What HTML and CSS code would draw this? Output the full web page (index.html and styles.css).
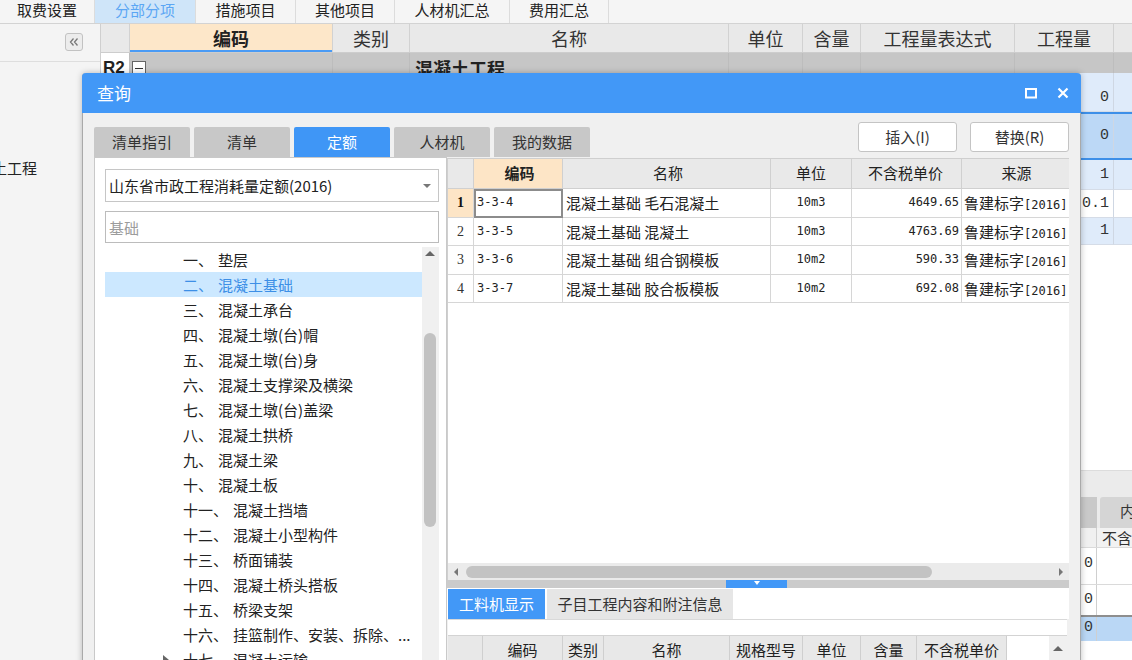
FILE: index.html
```html
<!DOCTYPE html>
<html lang="zh-CN">
<head>
<meta charset="utf-8">
<title>查询</title>
<link rel="stylesheet" href="styles.css">
</head>
<body>
<div class="app">
  <div class="topbar">
    <div class="ttab">取费设置</div>
    <div class="ttab active">分部分项</div>
    <div class="ttab">措施项目</div>
    <div class="ttab">其他项目</div>
    <div class="ttab">人材机汇总</div>
    <div class="ttab">费用汇总</div>
  </div>
  <div class="main">
    <aside class="side">
      <div class="side-head">
        <span class="collapse"><svg width="16" height="16" viewBox="0 0 16 16"><path d="M7.5 4.5L4.5 8L7.5 11.5M11.5 4.5L8.5 8L11.5 11.5" fill="none" stroke="#777" stroke-width="1.3"/></svg></span>
      </div>
      <div class="side-item">土工程</div>
    </aside>
    <section class="grid">
      <div class="g-row g-head">
        <div class="c c-num"></div>
        <div class="c c-code hl">编码</div>
        <div class="c c-type">类别</div>
        <div class="c c-name">名称</div>
        <div class="c c-unit">单位</div>
        <div class="c c-qty">含量</div>
        <div class="c c-expr">工程量表达式</div>
        <div class="c c-amt">工程量</div>
        <div class="c c-more"></div>
      </div>
      <div class="g-row g-r2">
        <div class="c c-num">R2</div>
        <div class="c c-code"><span class="minus"></span></div>
        <div class="c c-type"></div>
        <div class="c c-name">混凝土工程</div>
        <div class="c c-unit"></div>
        <div class="c c-qty"></div>
        <div class="c c-expr"></div>
        <div class="c c-amt"></div>
        <div class="c c-more"></div>
      </div>
      <div class="g-row d-row lb h39">
        <div class="c c-num"></div><div class="c c-code"></div><div class="c c-type"></div><div class="c c-name"></div><div class="c c-unit"></div><div class="c c-qty"></div><div class="c c-expr"></div>
        <div class="c c-amt">0</div><div class="c c-more"></div>
      </div>
      <div class="g-row d-row sel h44">
        <div class="c c-num"></div><div class="c c-code"></div><div class="c c-type"></div><div class="c c-name"></div><div class="c c-unit"></div><div class="c c-qty"></div><div class="c c-expr"></div>
        <div class="c c-amt">0</div><div class="c c-more"></div>
      </div>
      <div class="g-row d-row lb h30">
        <div class="c c-num"></div><div class="c c-code"></div><div class="c c-type"></div><div class="c c-name"></div><div class="c c-unit"></div><div class="c c-qty"></div><div class="c c-expr"></div>
        <div class="c c-amt">1</div><div class="c c-more"></div>
      </div>
      <div class="g-row d-row h28">
        <div class="c c-num"></div><div class="c c-code"></div><div class="c c-type"></div><div class="c c-name"></div><div class="c c-unit"></div><div class="c c-qty"></div><div class="c c-expr"></div>
        <div class="c c-amt">0.1</div><div class="c c-more"></div>
      </div>
      <div class="g-row d-row lb h27">
        <div class="c c-num"></div><div class="c c-code"></div><div class="c c-type"></div><div class="c c-name"></div><div class="c c-unit"></div><div class="c c-qty"></div><div class="c c-expr"></div>
        <div class="c c-amt">1</div><div class="c c-more"></div>
      </div>
      <div class="g-fill"></div>
      <div class="g-bottom">
        <div class="gb-band"></div>
        <div class="gb-tabs">
          <div class="gb-lead"></div>
          <div class="gb-tab">内容指引</div>
        </div>
        <div class="gb-row gb-head">
          <div class="gb-c1"></div>
          <div class="gb-c2">不含税单价</div>
        </div>
        <div class="gb-row h37">
          <div class="gb-c1">0</div>
          <div class="gb-c2"></div>
        </div>
        <div class="gb-row h30b">
          <div class="gb-c1">0</div>
          <div class="gb-c2"></div>
        </div>
        <div class="gb-row gb-sel">
          <div class="gb-c1">0</div>
          <div class="gb-c2"></div>
        </div>
      </div>
    </section>
  </div>
</div>

<div class="dialog">
  <div class="dlg-title">
    <span class="dlg-name">查询</span>
    <span class="dlg-icons">
      <svg class="ico" width="12" height="11" viewBox="0 0 12 11"><rect x="1" y="1" width="10" height="8.5" fill="none" stroke="#fff" stroke-width="2"/></svg>
      <svg class="ico" width="12" height="12" viewBox="0 0 12 12"><path d="M1.5 1.5L10.5 10.5M10.5 1.5L1.5 10.5" fill="none" stroke="#fff" stroke-width="2.2"/></svg>
    </span>
  </div>
  <div class="dlg-body">
    <div class="dlg-top">
      <div class="tabs">
        <div class="tab">清单指引</div>
        <div class="tab">清单</div>
        <div class="tab active">定额</div>
        <div class="tab">人材机</div>
        <div class="tab">我的数据</div>
      </div>
      <div class="btns">
        <button class="btn">插入(I)</button>
        <button class="btn">替换(R)</button>
      </div>
    </div>
    <div class="dlg-content">
      <div class="lpanel">
        <div class="select"><span>山东省市政工程消耗量定额(2016)</span><span class="caret"></span></div>
        <input class="search" type="text" placeholder="基础">
        <div class="tree">
          <ul class="tree-list">
            <li class="node"><span class="tg"></span><span class="no">一、</span><span>垫层</span></li>
            <li class="node on"><span class="tg"></span><span class="no">二、</span><span>混凝土基础</span></li>
            <li class="node"><span class="tg"></span><span class="no">三、</span><span>混凝土承台</span></li>
            <li class="node"><span class="tg"></span><span class="no">四、</span><span>混凝土墩(台)帽</span></li>
            <li class="node"><span class="tg"></span><span class="no">五、</span><span>混凝土墩(台)身</span></li>
            <li class="node"><span class="tg"></span><span class="no">六、</span><span>混凝土支撑梁及横梁</span></li>
            <li class="node"><span class="tg"></span><span class="no">七、</span><span>混凝土墩(台)盖梁</span></li>
            <li class="node"><span class="tg"></span><span class="no">八、</span><span>混凝土拱桥</span></li>
            <li class="node"><span class="tg"></span><span class="no">九、</span><span>混凝土梁</span></li>
            <li class="node"><span class="tg"></span><span class="no">十、</span><span>混凝土板</span></li>
            <li class="node"><span class="tg"></span><span class="no">十一、</span><span>混凝土挡墙</span></li>
            <li class="node"><span class="tg"></span><span class="no">十二、</span><span>混凝土小型构件</span></li>
            <li class="node"><span class="tg"></span><span class="no">十三、</span><span>桥面铺装</span></li>
            <li class="node"><span class="tg"></span><span class="no">十四、</span><span>混凝土桥头搭板</span></li>
            <li class="node"><span class="tg"></span><span class="no">十五、</span><span>桥梁支架</span></li>
            <li class="node"><span class="tg"></span><span class="no">十六、</span><span>挂篮制作、安装、拆除、...</span></li>
            <li class="node"><span class="tg"><span class="tri"></span></span><span class="no">十七、</span><span>混凝土运输</span></li>
          </ul>
          <div class="vscroll">
            <span class="arr-up"></span>
            <span class="vthumb"></span>
          </div>
        </div>
      </div>
      <div class="rpanel">
        <div class="qtable">
          <div class="q-row q-head">
            <div class="q q-n"></div>
            <div class="q q-code hl">编码</div>
            <div class="q q-name">名称</div>
            <div class="q q-unit">单位</div>
            <div class="q q-price">不含税单价</div>
            <div class="q q-src">来源</div>
          </div>
          <div class="q-row">
            <div class="q q-n cur">1</div>
            <div class="q q-code mono focus">3-3-4</div>
            <div class="q q-name">混凝土基础 毛石混凝土</div>
            <div class="q q-unit mono">10m3</div>
            <div class="q q-price mono">4649.65</div>
            <div class="q q-src">鲁建标字<span class="mono">[2016]</span></div>
          </div>
          <div class="q-row">
            <div class="q q-n">2</div>
            <div class="q q-code mono">3-3-5</div>
            <div class="q q-name">混凝土基础 混凝土</div>
            <div class="q q-unit mono">10m3</div>
            <div class="q q-price mono">4763.69</div>
            <div class="q q-src">鲁建标字<span class="mono">[2016]</span></div>
          </div>
          <div class="q-row">
            <div class="q q-n">3</div>
            <div class="q q-code mono">3-3-6</div>
            <div class="q q-name">混凝土基础 组合钢模板</div>
            <div class="q q-unit mono">10m2</div>
            <div class="q q-price mono">590.33</div>
            <div class="q q-src">鲁建标字<span class="mono">[2016]</span></div>
          </div>
          <div class="q-row">
            <div class="q q-n">4</div>
            <div class="q q-code mono">3-3-7</div>
            <div class="q q-name">混凝土基础 胶合板模板</div>
            <div class="q q-unit mono">10m2</div>
            <div class="q q-price mono">692.08</div>
            <div class="q q-src">鲁建标字<span class="mono">[2016]</span></div>
          </div>
        </div>
        <div class="hscroll">
          <span class="arr arr-l"></span>
          <span class="hthumb"></span>
          <span class="hspace"></span>
          <span class="arr arr-r"></span>
        </div>
        <div class="splitter"><span class="handle"></span></div>
        <div class="btabs">
          <div class="btab active">工料机显示</div>
          <div class="btab">子目工程内容和附注信息</div>
        </div>
        <div class="bband"></div>
        <div class="bhead">
          <div class="b b1"></div>
          <div class="b b2">编码</div>
          <div class="b b3">类别</div>
          <div class="b b4">名称</div>
          <div class="b b5">规格型号</div>
          <div class="b b6">单位</div>
          <div class="b b7">含量</div>
          <div class="b b8">不含税单价</div>
          <div class="bspace"></div>
          <div class="bscroll"><span class="arr-up"></span></div>
        </div>
      </div>
    </div>
  </div>
</div>
</body>
</html>
```

FILE: styles.css
```css
* { box-sizing: border-box; }
html, body {
  margin: 0;
  padding: 0;
  width: 1132px;
  height: 660px;
  overflow: hidden;
  background: #fff;
}
body {
  position: relative;
  font-family: "Noto Sans CJK SC", "Noto Sans", sans-serif;
  font-size: 15px;
  color: #222;
}
.mono { font-family: "DejaVu Sans Mono", "Liberation Mono", monospace; font-size: 12px; }

/* ---------- background app ---------- */
.app { display: flex; flex-direction: column; height: 660px; }
.topbar {
  display: flex;
  height: 24px;
  flex: none;
  background: #f5f5f5;
  border-bottom: 1px solid #d3d3d3;
}
.ttab {
  flex: none;
  width: 100px;
  border-right: 1px solid #dcdcdc;
  text-align: center;
  line-height: 19px;
  font-size: 15px;
  color: #222;
}
.ttab:nth-child(1) { width: 95px; }
.ttab:nth-child(2) { width: 101px; }
.ttab:nth-child(4) { width: 99px; }
.ttab:nth-child(5) { width: 115px; }
.ttab:nth-child(6) { width: 99px; }
.ttab.active { background: #cfe5f9; color: #5ba6f4; }

.main { display: flex; flex: 1; min-height: 0; }
.side {
  flex: none;
  width: 101px;
  background: #f4f4f4;
  border-right: 1px solid #cfcfcf;
}
.side-head {
  height: 38px;
  border-bottom: 1px solid #dedede;
  padding: 9px 0 0 65px;
}
.collapse {
  display: flex;
  align-items: center;
  justify-content: center;
  width: 18px;
  height: 18px;
  border: 1px solid #c2c2c2;
  border-radius: 3px;
  background: #ececec;
}
.side-item {
  margin: 94px 0 0 -8px;
  line-height: 24px;
  font-size: 15px;
  color: #222;
  white-space: nowrap;
}

.grid {
  flex: 1;
  min-width: 0;
  display: flex;
  flex-direction: column;
  overflow: hidden;
}
.g-row { display: flex; flex: none; }
.c {
  flex: none;
  border-right: 1px solid #d2d2d2;
  white-space: nowrap;
  overflow: hidden;
}
.c-num { width: 29px; }
.c-code { width: 203px; }
.c-type { width: 77px; }
.c-name { width: 319px; }
.c-unit { width: 74px; }
.c-qty { width: 58px; }
.c-expr { width: 154px; }
.c-amt { width: 99px; }
.c-more { width: 140px; }

.g-head {
  height: 29px;
  background: #e9e9e9;
  border-bottom: 1px solid #cdcdcd;
}
.g-head .c {
  text-align: center;
  font-size: 18px;
  line-height: 28px;
  color: #333;
}
.g-head .c.hl {
  background: #fde7c9;
  font-weight: bold;
  color: #222;
  box-shadow: inset 0 -2px 0 #4a9bf5;
}
.g-r2 {
  height: 20px;
  background: #c6c6c6;
  overflow: hidden;
}
.g-r2 .c {
  line-height: 30px;
  font-size: 18px;
  font-weight: bold;
  border-right-color: #bdbdbd;
}
.g-r2 .c-num {
  background: #fff;
  font-family: "Liberation Sans", sans-serif;
  font-size: 17px;
  padding-left: 2px;
}
.g-r2 .c-code { padding: 8px 0 0 2px; }
.minus {
  display: block;
  width: 14px;
  height: 14px;
  border: 1px solid #666;
  background: #fff;
  position: relative;
}
.minus::after {
  content: "";
  position: absolute;
  left: 2px;
  right: 2px;
  top: 6px;
  height: 1px;
  background: #333;
}
.g-r2 .c-name { padding-left: 5px; }

.d-row .c {
  border-right-color: #cfd7e3;
  border-bottom: 1px solid #d5dce7;
}
.d-row .c-amt {
  text-align: right;
  padding-right: 4px;
  font-family: "Liberation Mono", monospace;
  font-size: 15px;
  color: #333;
}
.d-row.lb { background: #dfebfa; }
.d-row.sel {
  background: #bcd8f6;
  border-top: 2px solid #3d8fe8;
  border-bottom: 2px solid #3d8fe8;
}
.d-row.sel .c { border-bottom: 0; }
.h39 { height: 39px; }
.h39 .c { line-height: 50px; }
.h44 { height: 48px; }
.h44 .c { line-height: 44px; }
.h30 { height: 30px; }
.h30 .c { line-height: 30px; }
.h28 { height: 28px; }
.h28 .c { line-height: 28px; }
.h27 { height: 27px; }
.h27 .c { line-height: 26px; }

.g-fill { flex: 1; }
.g-bottom { flex: none; height: 190px; display: flex; flex-direction: column; }
.gb-band { height: 18px; background: #ebebeb; border-top: 1px solid #dcdcdc; }
.gb-tabs {
  height: 40px;
  background: #ebebeb;
  display: flex;
  align-items: flex-end;
  gap: 3px;
}
.gb-lead { width: 996px; height: 31px; background: #c9c9c9; flex: none; }
.gb-tab {
  flex: none;
  width: 140px;
  height: 31px;
  background: #d5d5d5;
  border-radius: 3px 3px 0 0;
  padding-left: 20px;
  line-height: 28px;
  font-size: 15px;
  color: #333;
  white-space: nowrap;
}
.gb-row { display: flex; border-bottom: 1px solid #dadada; }
.gb-c1 {
  flex: none;
  width: 996px;
  border-right: 1px solid #cfcfcf;
  text-align: right;
  padding-right: 3px;
  font-family: "Liberation Mono", monospace;
  font-size: 15px;
  color: #333;
}
.gb-c2 { flex: 1; padding-left: 5px; white-space: nowrap; }
.gb-head { height: 20px; background: #f2f2f2; }
.gb-head .gb-c1 { background: #f0f0f0; }
.gb-head .gb-c2 { line-height: 20px; font-size: 15px; color: #333; }
.h37 { height: 37px; }
.h37 .gb-c1 { line-height: 32px; }
.h30b { height: 30px; border-bottom: 0; }
.h30b .gb-c1 { line-height: 30px; }
.gb-sel {
  height: 26px;
  background: #bad7f5;
  border-top: 2px solid #8e8e8e;
  border-bottom: 0;
}
.gb-sel .gb-c1 { line-height: 22px; }

/* ---------- dialog ---------- */
.dialog {
  position: absolute;
  left: 82px;
  top: 73px;
  width: 999px;
  height: 620px;
  border: 1px solid #a9a9a9;
  border-top: 0;
  border-radius: 4px 4px 0 0;
  background: #f0f0f0;
  box-shadow: 0 0 6px rgba(0, 0, 0, 0.25);
  display: flex;
  flex-direction: column;
}
.dlg-title {
  flex: none;
  height: 40px;
  margin: 0 -1px;
  background: #4298f7;
  border-radius: 4px 4px 0 0;
  display: flex;
  align-items: center;
  justify-content: space-between;
  padding: 0 12px 0 15px;
}
.dlg-name { color: #fff; font-size: 17px; line-height: 40px; }
.dlg-icons { display: flex; align-items: center; gap: 20px; }
.ico { display: block; }

.dlg-body {
  flex: 1;
  min-height: 0;
  display: flex;
  flex-direction: column;
  padding: 9px 11px 0 11px;
}
.dlg-top {
  flex: none;
  height: 35px;
  display: flex;
  justify-content: space-between;
}
.tabs { display: flex; gap: 4px; align-self: flex-end; }
.tab {
  width: 96px;
  height: 30px;
  background: #c8c8c8;
  border-radius: 2px 2px 0 0;
  text-align: center;
  line-height: 30px;
  font-size: 15px;
  color: #333;
}
.tab.active { background: #3f96f6; color: #fff; }
.btns { display: flex; gap: 13px; align-self: flex-start; }
.btn {
  width: 99px;
  height: 30px;
  background: #fff;
  border: 1px solid #c4c4c4;
  border-radius: 3px;
  font-family: "Noto Sans CJK SC", "Noto Sans", sans-serif;
  font-size: 15px;
  color: #333;
  padding: 0;
  line-height: 26px;
}

.dlg-content { flex: 1; min-height: 0; display: flex; }
.lpanel {
  flex: none;
  width: 353px;
  background: #fff;
  border: 1px solid #c9c9c9;
  border-bottom: 0;
  padding: 11px 7px 0 10px;
  display: flex;
  flex-direction: column;
}
.select {
  flex: none;
  height: 33px;
  border: 1px solid #c6c6c6;
  padding: 0 7px 0 3px;
  display: flex;
  align-items: center;
  justify-content: space-between;
  font-size: 15px;
  color: #222;
  white-space: nowrap;
}
.caret {
  width: 0;
  height: 0;
  border-left: 4px solid transparent;
  border-right: 4px solid transparent;
  border-top: 4px solid #777;
}
.search {
  flex: none;
  margin: 9px 0 0 0;
  height: 32px;
  width: 100%;
  border: 1px solid #bcbcbc;
  padding: 0 3px;
  font-family: "Noto Sans CJK SC", "Noto Sans", sans-serif;
  font-size: 15px;
  color: #222;
  outline: none;
  background: #fff;
}
.search::placeholder { color: #9c9c9c; }
.tree { flex: 1; min-height: 0; display: flex; margin-top: 4px; }
.tree-list {
  flex: 1;
  margin: 0;
  padding: 0;
  list-style: none;
  overflow: hidden;
}
.node {
  height: 25px;
  display: flex;
  align-items: center;
  gap: 5px;
  padding-left: 58px;
  font-size: 15px;
  color: #222;
  white-space: nowrap;
}
.node .tg { width: 20px; flex: none; display: flex; align-items: center; }
.node .tg + .no { margin-left: -5px; }
.node.on { background: #cce8ff; color: #3d8fe6; }
.tri {
  display: block;
  margin-top: 0;
  width: 0;
  height: 0;
  border-top: 5px solid transparent;
  border-bottom: 5px solid transparent;
  border-left: 6px solid #666;
}
.vscroll {
  flex: none;
  width: 17px;
  background: #f0f0f0;
  display: flex;
  flex-direction: column;
  align-items: flex-start;
}
.arr-up {
  display: block;
  margin: 4px 0 0 3px;
  width: 0;
  height: 0;
  border-left: 5px solid transparent;
  border-right: 5px solid transparent;
  border-bottom: 5px solid #666;
}
.vthumb {
  display: block;
  margin: 77px 0 0 2px;
  width: 12px;
  height: 194px;
  border-radius: 6px;
  background: #c2c2c2;
}

.rpanel {
  flex: 1;
  min-width: 0;
  display: flex;
  flex-direction: column;
  padding-top: 1px;
}
.qtable {
  flex: none;
  height: 405px;
  background: #fff;
  border-top: 1px solid #cfcfcf;
  border-left: 1px solid #cfcfcf;
}
.q-row { display: flex; height: 28.5px; }
.q {
  flex: none;
  border-right: 1px solid #d6d6d6;
  border-bottom: 1px solid #d6d6d6;
  white-space: nowrap;
  overflow: hidden;
  line-height: 27px;
  font-size: 15px;
  color: #222;
}
.q-n { width: 26px; text-align: center; font-family: "Liberation Serif", serif; font-size: 14px; color: #333; }
.q-code { width: 89px; padding-left: 3px; }
.q-name { width: 208px; padding-left: 3px; }
.q-unit { width: 81px; text-align: center; }
.q-price { width: 110px; text-align: right; padding-right: 2px; }
.q-src { width: 107px; padding-left: 2px; border-right: 0; }
.q.mono { font-size: 12px; color: #222; }
.q-src .mono { font-size: 12px; }
.q-head { height: 30px; }
.q-head .q {
  background: #e9e9e9;
  text-align: center;
  line-height: 28px;
  font-size: 15px;
  color: #222;
  border-color: #d0d0d0;
}
.q-head .q.hl { background: #fde5c6; font-weight: bold; }
.q-n.cur { background: #fde5c6; font-weight: bold; color: #111; }
.focus { outline: 2px solid #8c8c8c; outline-offset: -2px; }

.hscroll {
  flex: none;
  height: 17px;
  background: #ebebeb;
  display: flex;
  align-items: center;
  border-left: 1px solid #cfcfcf;
}
.arr { flex: none; width: 16px; display: flex; justify-content: center; }
.arr::before {
  content: "";
  width: 0;
  height: 0;
  border-top: 4px solid transparent;
  border-bottom: 4px solid transparent;
}
.arr-l::before { border-right: 4px solid #777; }
.arr-r::before { border-left: 4px solid #777; }
.hthumb {
  flex: none;
  margin-left: 2px;
  width: 466px;
  height: 12px;
  border-radius: 6px;
  background: #c3c3c3;
}
.hspace { flex: 1; }
.splitter {
  flex: none;
  height: 8px;
  background: #cbcbcb;
  display: flex;
}
.handle {
  margin-left: 279px;
  width: 61px;
  height: 8px;
  background: #4298f7;
  display: flex;
  justify-content: center;
}
.handle::before {
  content: "";
  margin-top: 1px;
  width: 0;
  height: 0;
  border-left: 3px solid transparent;
  border-right: 3px solid transparent;
  border-top: 4px solid #fff;
}
.btabs {
  flex: none;
  height: 31px;
  padding: 1px 0 0 1px;
  background: #fff;
  display: flex;
  gap: 2px;
}
.btab {
  flex: none;
  width: 186px;
  height: 30px;
  background: #e6e6e6;
  text-align: center;
  line-height: 30px;
  font-size: 15px;
  color: #333;
}
.btab.active { width: 97px; background: #4298f7; color: #fff; }
.bband {
  flex: none;
  height: 17px;
  margin: 0 2px 0 1px;
  background: #fff;
  border-top: 1px solid #d9d9d9;
  border-bottom: 1px solid #d3d3d3;
}
.bhead {
  flex: none;
  height: 30px;
  margin: 0 2px 0 1px;
  display: flex;
  background: #fff;
}
.b {
  flex: none;
  background: #e8e8e8;
  border-right: 1px solid #cfcfcf;
  text-align: center;
  line-height: 28px;
  font-size: 15px;
  color: #222;
  white-space: nowrap;
}
.b1 { width: 35px; }
.b2 { width: 80px; }
.b3 { width: 41px; }
.b4 { width: 126px; }
.b5 { width: 73px; }
.b6 { width: 58px; }
.b7 { width: 56px; }
.b8 { width: 90px; }
.bspace { flex: 1; }
.bscroll { flex: none; width: 18px; background: #f0f0f0; }
.bscroll .arr-up { margin: 10px 0 0 4px; }
```
